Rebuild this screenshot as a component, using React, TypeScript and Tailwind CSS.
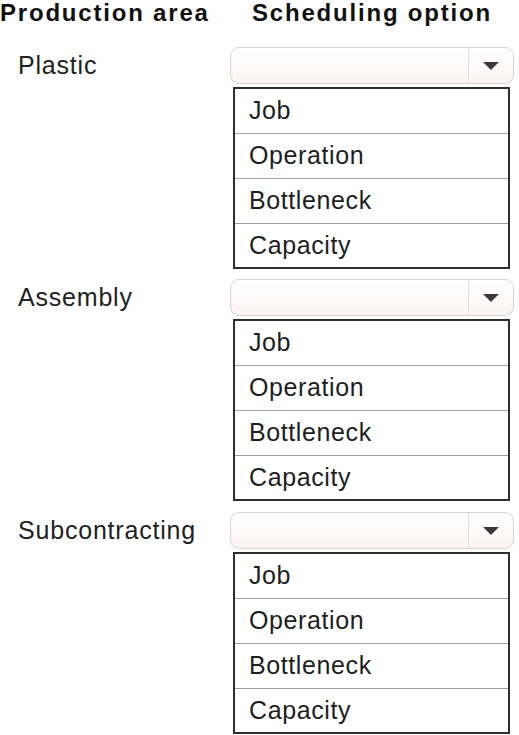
import React from 'react';

const OPTIONS = ['Job', 'Operation', 'Bottleneck', 'Capacity'];
const ROW_HEIGHTS = ['h-[44px]', 'h-[45px]', 'h-[45px]', 'h-[44px]'];

const AREAS = [
  { label: 'Plastic', top: 'mt-[21px]' },
  { label: 'Assembly', top: 'mt-[10px]' },
  { label: 'Subcontracting', top: 'mt-[11px]' },
];

const Dropdown: React.FC = () => (
  <div className="flex h-[37px] w-[284px] rounded-[9px] border border-[#d4d4d4] bg-gradient-to-b from-white to-[#fbf4f5]">
    <div className="flex-1" />
    <div className="flex w-[45px] items-center justify-center border-l border-[#dedede]">
      <svg width="16" height="8" viewBox="0 0 16 8">
        <polygon points="0,0 16,0 8,8" fill="#3a3a3a" />
      </svg>
    </div>
  </div>
);

const OptionList: React.FC = () => (
  <ul className="mt-[3px] ml-[3px] w-[277px] border-2 border-[#2e2e2e] bg-white">
    {OPTIONS.map((opt, i) => (
      <li
        key={opt}
        className={`flex ${ROW_HEIGHTS[i]} items-center pl-[14px] text-[25px] tracking-[0.6px] text-[#1e1e1e] ${
          i > 0 ? 'border-t border-[#a0a0a0]' : ''
        }`}
      >
        {opt}
      </li>
    ))}
  </ul>
);

export default function App() {
  return (
    <div className="h-[735px] w-[519px] overflow-hidden bg-white font-['Liberation_Sans',Arial,sans-serif]">
      <div className="flex h-[26px] items-center text-[24px] font-bold tracking-[1.8px] text-[#111]">
        <span className="w-[252px]">Production area</span>
        <span>Scheduling option</span>
      </div>

      {AREAS.map((area) => (
        <div key={area.label} className={`flex ${area.top}`}>
          <div className="w-[230px] pl-[18px] text-[25px] tracking-[0.8px] text-[#222]">
            {area.label}
          </div>
          <div className="flex flex-col">
            <Dropdown />
            <OptionList />
          </div>
        </div>
      ))}
    </div>
  );
}
